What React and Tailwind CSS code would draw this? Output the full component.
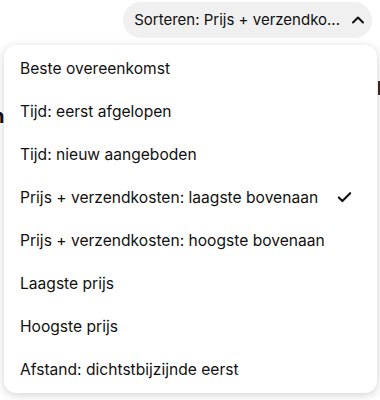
import { Check, ChevronUp } from "lucide-react";

const options = [
  "Beste overeenkomst",
  "Tijd: eerst afgelopen",
  "Tijd: nieuw aangeboden",
  "Prijs + verzendkosten: laagste bovenaan",
  "Prijs + verzendkosten: hoogste bovenaan",
  "Laagste prijs",
  "Hoogste prijs",
  "Afstand: dichtstbijzijnde eerst",
];

const selected = 3;

export default function App() {
  return (
    <div
      className="relative h-[400px] w-[380px] overflow-hidden bg-white text-[#111]"
      style={{ fontFamily: "Inter, 'Noto Sans', sans-serif" }}
    >
      {/* page behind the menu */}
      <div className="flex justify-end pt-[2px] pr-[8px]">
        <button className="flex h-[36px] items-center gap-[8px] rounded-full bg-[#f0f0f0] pl-[11px] pr-[4px] text-[15px]">
          <span>Sorteren: Prijs + verzendko...</span>
          <ChevronUp size={20} strokeWidth={2.4} />
        </button>
      </div>
      <div className="mt-[68px] -ml-[8px] text-[20px] font-bold leading-none">n</div>
      <div className="absolute right-0 top-[81px] h-[14px] w-[2px] bg-[#3a2a20]" />

      {/* dropdown */}
      <ul className="absolute left-[4px] top-[45px] w-[373px] rounded-[12px] bg-white py-[2px] shadow-[0_2px_10px_rgba(0,0,0,0.18)]">
        {options.map((o, i) => (
          <li
            key={o}
            className="flex h-[43px] items-center justify-between pl-[16px] pr-[24px] text-[15.6px]"
          >
            <span>{o}</span>
            {i === selected && <Check size={17} strokeWidth={3} />}
          </li>
        ))}
      </ul>
    </div>
  );
}
